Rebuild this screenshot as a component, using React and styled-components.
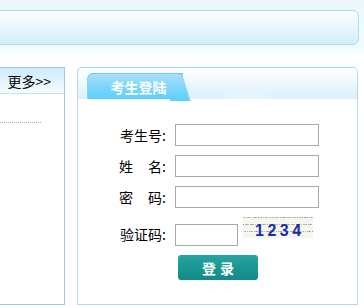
import styled, { createGlobalStyle } from "styled-components";

const GlobalStyle = createGlobalStyle`
  html, body {
    margin: 0;
    padding: 0;
    background: #fff;
  }
  body {
    font-family: "Noto Sans CJK SC", "Liberation Sans", sans-serif;
    font-size: 14px;
    color: #000;
  }
`;

const Page = styled.div`
  width: 364px;
  height: 308px;
  overflow: hidden;
  background: linear-gradient(#ebf7fd 0, #f4fbfe 48px, #fff 60px);
`;

const TopBar = styled.div`
  margin: 10px 5px 0 -10px;
  height: 33px;
  border: 1px solid #a6e1f6;
  border-radius: 6px;
  background: linear-gradient(#fdfeff 0%, #eaf7fd 45%, #d2eefb 100%);
`;

const Content = styled.div`
  display: flex;
  margin-top: 22px;
`;

const SidePanel = styled.div`
  margin-left: -10px;
  width: 73px;
  height: 236px;
  border: 1px solid #a3c2f7;
  background: #fff;
`;

const SideHeader = styled.div`
  height: 25px;
  display: flex;
  align-items: center;
  justify-content: flex-end;
  padding-right: 13px;
  font-size: 14px;
  border-bottom: 1px solid #c6e4f8;
  background: linear-gradient(#cdeafb 0%, #e2f4fd 55%, #f6fcff 100%);
`;

const DottedLine = styled.div`
  width: 50px;
  margin-top: 28px;
  border-bottom: 1px dotted #b0b0b0;
`;

const LoginPanel = styled.div`
  margin-left: 12px;
  width: 279px;
  height: 236px;
  border: 1px solid #b8d6f3;
  border-top-color: #92e0f8;
  border-radius: 5px 5px 0 0;
  background: #fff;
`;

const LoginHeader = styled.div`
  height: 31px;
  display: flex;
  align-items: flex-end;
  padding-left: 9px;
  border-radius: 5px 5px 0 0;
  background:
    radial-gradient(ellipse 60px 26px at 170px 40px, rgba(255, 255, 255, 0.9), rgba(255, 255, 255, 0) 70%),
    linear-gradient(#ffffff 0%, #f0f9fd 45%, #d9f0fa 100%);
`;

const Tab = styled.div`
  position: relative;
  width: 96px;
  height: 26px;
  display: flex;
  align-items: center;
  justify-content: center;
  padding-left: 6px;
  box-sizing: border-box;
  border-top: 1px solid #6cc9f1;
  border-left: 1px solid #86d3f3;
  border-top-left-radius: 6px;
  background: linear-gradient(#a9dff9 0%, #7fd6fa 50%, #5ccffb 100%);
  color: #fff;
  font-size: 14px;
  font-weight: bold;
  z-index: 0;

  &::after {
    content: "";
    position: absolute;
    top: -1px;
    right: -8px;
    width: 20px;
    height: 27px;
    border-top: 1px solid #6cc9f1;
    border-right: 1px solid #78cdf2;
    border-top-right-radius: 5px;
    background: linear-gradient(#a9dff9 0%, #7fd6fa 50%, #5ccffb 100%);
    transform: skewX(18deg);
    transform-origin: bottom left;
    z-index: -1;
  }
`;

const Form = styled.div`
  display: grid;
  grid-template-columns: 88px auto;
  column-gap: 9px;
  row-gap: 9px;
  align-items: center;
  padding-top: 25px;
`;

const Label = styled.div`
  text-align: right;
  white-space: nowrap;
  line-height: 16px;
`;

const Gap = styled.span`
  display: inline-block;
  width: 15px;
`;

const TextInput = styled.input`
  box-sizing: border-box;
  width: ${(p) => p.$width}px;
  height: 22px;
  margin: 0;
  padding: 0 3px;
  border: 1px solid #a9a9a9;
  background: #fff;
  outline: none;
`;

const CodeRow = styled.div`
  display: flex;
  align-items: flex-end;
`;

const CodeLabel = styled(Label)`
  margin-top: 5px;
`;

const Captcha = styled.svg`
  display: block;
  margin-left: 5px;
  margin-bottom: 8px;
`;

const ButtonCell = styled.div`
  grid-column: 2;
`;

const LoginButton = styled.button`
  width: 80px;
  height: 25px;
  margin-left: 3px;
  border: none;
  border-radius: 3px;
  background: linear-gradient(#27a5a3 0%, #1a9792 50%, #138a86 100%);
  color: #fff;
  font-family: "Noto Sans CJK SC", sans-serif;
  font-size: 14px;
  font-weight: bold;
  letter-spacing: 4px;
  padding: 0 0 0 4px;
  cursor: pointer;
`;

const noiseColors = ["#c9c28e", "#98a8d8", "#d6a8c0", "#a8cc98", "#7f88c8", "#e0c070", "#b0b0b0"];
const noise = Array.from({ length: 220 }, (_, i) => {
  const x = (i * 37 + Math.floor(i / 9) * 5) % 70;
  const y = (i * 53 + (i % 7) * 3) % 21;
  return { x, y, c: noiseColors[(i * 3) % noiseColors.length] };
});

function CaptchaImage() {
  return (
    <Captcha width="70" height="21" viewBox="0 0 70 21">
      <rect width="70" height="21" fill="#f6f6f1" />
      {noise.map((d, i) => (
        <rect key={i} x={d.x} y={d.y} width="1" height="1" fill={d.c} />
      ))}
      <text
        x="12"
        y="19"
        fill="#1e2cae"
        fontFamily="Liberation Sans, sans-serif"
        fontSize="16"
        fontWeight="bold"
        letterSpacing="3.5"
      >
        1234
      </text>
    </Captcha>
  );
}

export default function App() {
  return (
    <Page>
      <GlobalStyle />
      <TopBar />
      <Content>
        <SidePanel>
          <SideHeader>更多&gt;&gt;</SideHeader>
          <DottedLine />
        </SidePanel>
        <LoginPanel>
          <LoginHeader>
            <Tab>考生登陆</Tab>
          </LoginHeader>
          <Form>
            <Label>考生号:</Label>
            <TextInput $width={144} />
            <Label>
              姓<Gap />名:
            </Label>
            <TextInput $width={144} />
            <Label>
              密<Gap />码:
            </Label>
            <TextInput type="password" $width={144} />
            <CodeLabel>验证码:</CodeLabel>
            <CodeRow>
              <TextInput $width={63} />
              <CaptchaImage />
            </CodeRow>
            <ButtonCell>
              <LoginButton>登录</LoginButton>
            </ButtonCell>
          </Form>
        </LoginPanel>
      </Content>
    </Page>
  );
}
